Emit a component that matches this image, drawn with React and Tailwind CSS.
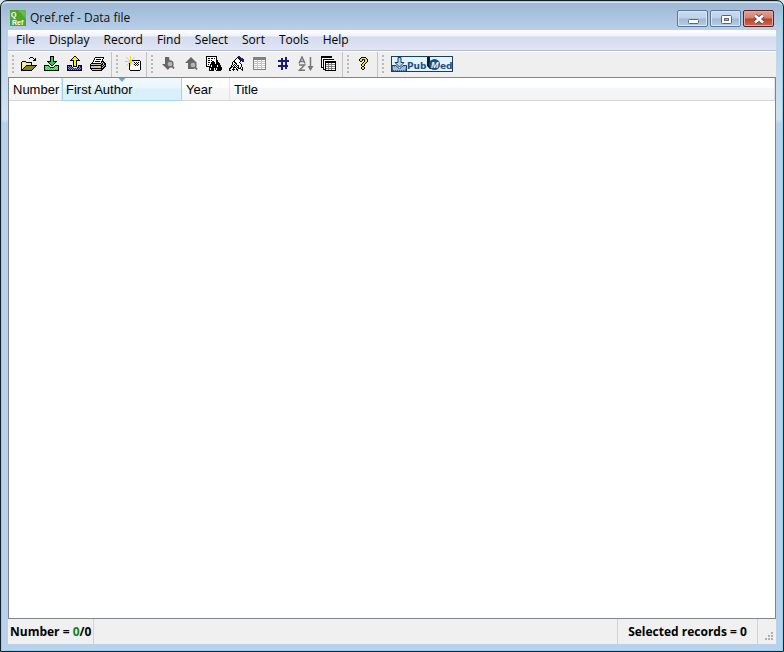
import { useState } from "react";

// one letter per colour used in the toolbar bitmaps
const palette = {
  K: "#000000",
  W: "#ffffff",
  Y: "#f4ee9a",
  O: "#85802c",
  G: "#2fd04a",
  g: "#8fd89a",
  L: "#fff200",
  N: "#1c1c78",
  n: "#8f92d0",
  S: "#808080",
  s: "#c4c4c4",
  y: "#e6d820",
};

const openFolder = [
  "................",
  ".........KKK....",
  "........K...K.K.",
  ".............KK.",
  "............KKK.",
  ".KKKK...........",
  "KYYYYKKKKKK.....",
  "KYYYYYYYYYK.....",
  "KYYYYYYYYYK.....",
  "KYYYYKKKKKKKKKKK",
  "KYYYKOOOOOOOOOK.",
  "KYYKOOOOOOOOOK..",
  "KYKOOOOOOOOOK...",
  "KKOOOOOOOOOK....",
  "KKKKKKKKKKK.....",
];

const importArrow = [
  "......KKKK......",
  "......KGGK......",
  "......KGGK......",
  "......KGGK......",
  "......KGGK......",
  "...KKKKGGKKKK...",
  "....KGGGGGGK....",
  ".....KGGGGK.....",
  "......KGGK......",
  "KKKKK..KK..KKKK.",
  "KgGgGK....KgGgK.",
  "KGgGgGKKKKgGgGK.",
  "KgGgGgGgGgGgGgK.",
  "KGgGgGgGgGgGgGK.",
  "KKKKKKKKKKKKKKK.",
];

const exportArrow = [
  ".......KK.......",
  "......KLLK......",
  ".....KLLLLK.....",
  "....KLLLLLLK....",
  "...KKKKLLKKKK...",
  "......KLLK......",
  "......KLLK......",
  "......KLLK......",
  "......KLLK......",
  "KKKKK.KLLK.KKKK.",
  "KnNnK.KKKK.KnNK.",
  "KNnNnK....KNnNK.",
  "KnNnNnNnNnNnNnK.",
  "KNnNnNnNnNnNnNK.",
  "KKKKKKKKKKKKKKK.",
];

const printer = [
  "................",
  ".....KKKKKKKKK..",
  "....KWWWWWWWWK..",
  "....KWKKKKKWK...",
  "...KWWWWWWWWK...",
  "...KWKKKKKWKKK..",
  "..KWWWWWWWWKsKK.",
  ".KKKKKKKKKKsKsKK",
  "KssssssssssKKsKK",
  "KKKKKKKKKKKKsKsK",
  "KsssssssLLsKKsKK",
  "KssssssssssKsKK.",
  "KKKKKKKKKKKKKK..",
  ".KsssssssssKK...",
  "..KKKKKKKKKK....",
];

const newRecord = [
  ".....y..........",
  ".y...y...y......",
  "..y..y..y.......",
  "...y.y.y........",
  "....yyyKKKKKKKK.",
  "yyyyyLyyyWWWWWWK",
  "....yyyWWKWKWKWK",
  "...yKyWyWWKWKWWK",
  "..y.KyWWyKWKWKWK",
  ".y..KyWWWWKWKWWK",
  "....KWWWWWWWWWWK",
  "....KWWWWWWWWWWK",
  "....KWWWWWWWWWWK",
  "....KWWWWWWWWWWK",
  ".....KKKKKKKKKK.",
];

const findRecord = [
  "KKKKKKKKKKK.....",
  "KWWWWWWWWWK.....",
  "KWKKWKKWKWK.....",
  "KWWWWWWWWWK.....",
  "KWKKWKWWWWKK....",
  "KWWWWWKKWWKK....",
  "KWKKWKKKKWKKK...",
  "KWWWWKKKKWKKKK..",
  "KWKWKKKKKKKKKK..",
  "KWWWKWKKKKKWKKK.",
  "KKKKKWKKKKKWKKK.",
  "...KKKKKKKKKKKKK",
  "...KWKKK.KWKKKKK",
  "...KWKKK.KWKKKKK",
  "...KKKKK..KKKKK.",
];

const editHand = [
  ".........NN.....",
  "........KNNN....",
  ".......KWKNNNN..",
  "......KWWWKNNNN.",
  ".....KWWWWWKNNN.",
  "....KKWWWWWK.NN.",
  "...KWKKWWWK.....",
  "...KWWKKWWWK....",
  "...KWKWKWWWWK...",
  "..KWKWKWKKWWK...",
  "..KKWKWKWKWWK...",
  ".KKWKKKWKKWKWK..",
  "KKWWKWWKWKKKWK..",
  "K..KKK.KK...KK..",
  "KK..K...K....K..",
];

const datasheet = [
  "................",
  ".SSSSSSSSSSSSS..",
  ".SSSSSSSSSSSSS..",
  ".SSSSSSSSSSSSS..",
  ".SWWWsWWWsWWWS..",
  ".SsssssssssssS..",
  ".SWWWsWWWsWWWS..",
  ".SsssssssssssS..",
  ".SWWWsWWWsWWWS..",
  ".SsssssssssssS..",
  ".SWWWsWWWsWWWS..",
  ".SsssssssssssS..",
  ".SWWWsWWWsWWWS..",
  ".SSSSSSSSSSSSS..",
];

const hash = [
  "................",
  "..........NN....",
  "......NN..NN....",
  "......NN..NN....",
  "...NNNNNNNNNNN..",
  "...NNNNNNNNNNN..",
  "......NN..NN....",
  "......NN..NN....",
  "......NN..NN....",
  "...NNNNNNNNNN...",
  "...NNNNNNNNNN...",
  "......NN..NN....",
  "......NN..NN....",
  "......NN........",
];

const copies = [
  "KKKKKKKKKKK.....",
  "KKKKKKKKKKK.....",
  "KWWWWWWWWWW.....",
  "KWKKKKKKKKKKK...",
  "KWKWWWWWWWWWW...",
  "KWKWKKKKKKKKKKK.",
  "KWKWKKKKKKKKKKK.",
  "KWKWKWWSWWSWWWK.",
  "KWKWKSSSSSSSSSK.",
  "KWKWKWWSWWSWWWK.",
  "KWKWKSSSSSSSSSK.",
  "KKKWKWWSWWSWWWK.",
  "..KWKSSSSSSSSSK.",
  "..KKKWWSWWSWWWK.",
  "....KKKKKKKKKKK.",
];

const question = [
  "................",
  ".....KKKKK......",
  "....KyLLLyK.....",
  "...KyLKKKLyK....",
  "...KyyK.KLyK....",
  "....KK..KLyK....",
  ".......KLyK.....",
  "......KLyK......",
  ".....KLyK.......",
  ".....KLyK.......",
  "......KK........",
  ".....KLyK.......",
  ".....KyyK.......",
  "......KK........",
];

const PixelIcon = ({ rows }) => (
  <svg
    viewBox="0 0 16 16"
    className="h-4 w-4"
    shapeRendering="crispEdges"
    aria-hidden="true"
  >
    {rows.map((row, y) =>
      [...row].map((c, x) =>
        palette[c] ? (
          <rect
            key={`${x}-${y}`}
            x={x}
            y={y}
            width="1"
            height="1"
            fill={palette[c]}
          />
        ) : null
      )
    )}
  </svg>
);

const NextIcon = () => (
  <svg viewBox="0 0 16 16" className="h-4 w-4" aria-hidden="true">
    <path d="M5 1h4l1 6h3l-5 7-6-6h3z" fill="#666" />
    <circle cx="10" cy="8" r="3" fill="#b5b5b5" stroke="#6a6a6a" strokeWidth="1.3" />
    <path d="M12 10l2 2.500" stroke="#666" strokeWidth="1.800" />
  </svg>
);

const PreviousIcon = () => (
  <svg viewBox="0 0 16 16" className="h-4 w-4" aria-hidden="true">
    <path d="M8 1l6 6h-3v6H5V7H2z" fill="#666" />
    <circle cx="10" cy="9" r="3" fill="#b5b5b5" stroke="#6a6a6a" strokeWidth="1.3" />
    <path d="M12 11l2 2.500" stroke="#666" strokeWidth="1.800" />
  </svg>
);

const SortIcon = () => (
  <svg
    viewBox="0 0 16 16"
    className="h-4 w-4"
    fill="none"
    stroke="#777"
    strokeWidth="1.500"
    aria-hidden="true"
  >
    <path d="M1 7.500l3-6.500 3 6.500M2 5.500h4" />
    <path d="M1 9h5.500L1.500 14.200h5.500" />
    <path d="M12.500 1v12" />
    <path d="M9.500 10h6l-3 5z" fill="#777" stroke="none" />
  </svg>
);

const PubMedLogo = () => (
  <svg viewBox="0 0 62 16" className="h-4 w-[62px]" aria-hidden="true">
    <rect x="0.5" y="0.5" width="61" height="15" fill="#e4f4fc" stroke="#173e66" />
    <path d="M1 9.500h4l3 3h1l3-3h3.500V15H1z" fill="#7094b8" stroke="#173e66" />
    <path
      d="M2 11h3M3 12h3M2 13h12M3 14h12M12 11h3M11 12h4"
      stroke="#d7eaf8"
      strokeDasharray="1 1"
    />
    <path
      d="M7 1.500h3v5h3l-4.500 4.500L4 6.500h3z"
      fill="#b8d4ee"
      stroke="#173e66"
    />
    <text
      x="16"
      y="13"
      fill="#174f8c"
      fontFamily="'DejaVu Sans', sans-serif"
      fontWeight="bold"
      fontSize="9"
    >
      Pub
    </text>
    <path d="M36 1h3v10l2 2h-2l-3-3z" fill="#111827" />
    <circle cx="43.5" cy="8.500" r="5.500" fill="#174f8c" />
    <text
      x="40"
      y="12"
      fill="#e9f6fd"
      fontFamily="'Liberation Sans', sans-serif"
      fontStyle="italic"
      fontWeight="bold"
      fontSize="9"
    >
      M
    </text>
    <text
      x="49"
      y="13"
      fill="#174f8c"
      fontFamily="'DejaVu Sans', sans-serif"
      fontWeight="bold"
      fontSize="9"
    >
      ed
    </text>
  </svg>
);

const AppIcon = () => (
  <svg viewBox="0 0 16 16" className="h-4 w-4" aria-hidden="true">
    <rect width="16" height="16" fill="#4da52f" />
    <path d="M8 0h8v9z" fill="#66b94a" />
    <g
      fill="#fff"
      fontFamily="'Liberation Sans', sans-serif"
      fontWeight="bold"
      fontSize="7"
    >
      <text x="1" y="7">
        Q
      </text>
      <text x="2" y="15">
        Ref
      </text>
    </g>
  </svg>
);

const menus = [
  "File",
  "Display",
  "Record",
  "Find",
  "Select",
  "Sort",
  "Tools",
  "Help",
];

const toolGroups = [
  [
    { label: "Open", icon: <PixelIcon rows={openFolder} /> },
    { label: "Import", icon: <PixelIcon rows={importArrow} /> },
    { label: "Export", icon: <PixelIcon rows={exportArrow} /> },
    { label: "Print", icon: <PixelIcon rows={printer} /> },
  ],
  [{ label: "New record", icon: <PixelIcon rows={newRecord} /> }],
  [
    { label: "Find next", icon: <NextIcon /> },
    { label: "Find previous", icon: <PreviousIcon /> },
    { label: "Find", icon: <PixelIcon rows={findRecord} /> },
    { label: "Edit", icon: <PixelIcon rows={editHand} /> },
    { label: "Datasheet", icon: <PixelIcon rows={datasheet} /> },
    { label: "Go to number", icon: <PixelIcon rows={hash} /> },
    { label: "Sort", icon: <SortIcon /> },
    { label: "Copy", icon: <PixelIcon rows={copies} /> },
  ],
  [{ label: "Help", icon: <PixelIcon rows={question} /> }],
];

const columns = [
  { name: "Number", width: "w-[53px]" },
  { name: "First Author", width: "w-[120px]" },
  { name: "Year", width: "w-12" },
  { name: "Title", width: "" },
];

const Grip = () => (
  <span className="mr-[2px] flex w-[3px] flex-col gap-[2px]">
    {[0, 1, 2, 3, 4].map((i) => (
      <span key={i} className="h-[2px] w-[2px] bg-[#b9b9b9]" />
    ))}
  </span>
);

const TitleBar = () => (
  <header className="flex h-[29px] items-start justify-between pr-[2px] pt-[9px]">
    <div className="flex items-center gap-1 pl-[2px]">
      <AppIcon />
      <h1 className="text-[12px] leading-4 text-[#111]">
        Qref.ref - Data file
      </h1>
    </div>
    <div className="flex gap-[2px]">
      <button
        aria-label="Minimize"
        className="flex h-[17px] w-[31px] items-center justify-center rounded-[2px] border border-[#5c7896] bg-[linear-gradient(#c9dbee_0%,#bdd2e9_48%,#9db8d6_52%,#b4cde8_100%)] shadow-[inset_0_0_0_1px_#d9e7f5]"
      >
        <svg viewBox="0 0 12 12" className="h-3 w-3">
          <rect x="1.500" y="6.500" width="10" height="4" rx="1" fill="#fff" stroke="#5a6472" />
        </svg>
      </button>
      <button
        aria-label="Maximize"
        className="flex h-[17px] w-[31px] items-center justify-center rounded-[2px] border border-[#5c7896] bg-[linear-gradient(#c9dbee_0%,#bdd2e9_48%,#9db8d6_52%,#b4cde8_100%)] shadow-[inset_0_0_0_1px_#d9e7f5]"
      >
        <svg viewBox="0 0 12 12" className="h-3 w-3">
          <rect x="1.500" y="2.500" width="10" height="8" rx="1" fill="#fff" stroke="#5a6472" />
          <rect x="4.500" y="5.500" width="4" height="2" fill="#a9c0dc" stroke="#5a6472" />
        </svg>
      </button>
      <button
        aria-label="Close"
        className="flex h-[17px] w-[31px] items-center justify-center rounded-[2px] border border-[#53202a] bg-[linear-gradient(#dfa194_0%,#d2806f_48%,#b8402b_52%,#cf6b50_100%)] shadow-[inset_0_0_0_1px_#e5aa9f]"
      >
        <svg viewBox="0 0 12 12" className="h-3 w-3">
          <path d="M2 2.500l8 7M10 2.500l-8 7" stroke="#5b4a50" strokeWidth="4.400" />
          <path d="M2 2.500l8 7M10 2.500l-8 7" stroke="#fff" strokeWidth="2.500" />
        </svg>
      </button>
    </div>
  </header>
);

const App = () => {
  const [sortBy, setSortBy] = useState("First Author");

  return (
    <div className="bg-[#dfe3e6]">
      <div className="flex min-h-screen flex-col rounded-t-[7px] border border-[#10202a] bg-[#b9d1ea] bg-[linear-gradient(#9cb6d3_0px,#a9c2de_14px,#b9d0e9_30px,#d3e2f2_118px,#b9d1ea_122px)] px-[7px] pb-[7px] font-['Open_Sans',sans-serif] shadow-[inset_0_0_0_1px_#8fd3e6,inset_0_2px_0_#dbe8f5]">
        <TitleBar />

        <nav className="flex h-[21px] items-center border-b border-[#b6bccc] bg-[linear-gradient(#ffffff_0px,#eff2fa_6px,#d5dbed_7px,#e1e6f6_20px)] pl-px">
          {menus.map((menu) => (
            <button
              key={menu}
              className="px-[7px] text-[12px] leading-4 text-black"
            >
              {menu}
            </button>
          ))}
        </nav>

        <div
          role="toolbar"
          className="flex h-[26px] items-stretch border-t border-white bg-[#efefef]"
        >
          {toolGroups.map((group, i) => (
            <div
              key={i}
              className="flex items-center border-r border-[#c3c3c3] pb-px pl-1 pr-[2px]"
            >
              <Grip />
              {group.map((tool) => (
                <button
                  key={tool.label}
                  aria-label={tool.label}
                  title={tool.label}
                  className="flex h-6 w-[23px] items-center justify-center"
                >
                  {tool.icon}
                </button>
              ))}
            </div>
          ))}
          <div className="flex items-center pb-px pl-1">
            <Grip />
            <button aria-label="PubMed" className="px-1">
              <PubMedLogo />
            </button>
          </div>
        </div>

        <main className="grow border border-[#7f858d] bg-white font-['Liberation_Sans',Arial,sans-serif]">
          <table className="w-full table-fixed border-collapse">
            <thead>
              <tr>
                {columns.map(({ name, width }) => (
                  <th
                    key={name}
                    className={`${width} border-b p-0 text-left font-normal ${
                      sortBy === name
                        ? "border-b-[#a5d8ea] bg-[linear-gradient(#f0f9fd_0%,#eaf6fc_45%,#d9eff9_50%,#d9eff9_100%)] shadow-[inset_1px_0_0_#9fd4e6,inset_-1px_0_0_#9fd4e6]"
                        : "border-b-[#d5d5d5] bg-[linear-gradient(#ffffff_0%,#ffffff_42%,#f6f7f9_46%,#f3f4f6_100%)] shadow-[inset_-1px_0_0_#e1e3e6]"
                    }`}
                  >
                    <button
                      onClick={() => setSortBy(name)}
                      className="relative block h-[22px] w-full whitespace-nowrap pl-1 pt-[2px] text-left text-[13px] leading-5 text-black"
                    >
                      {name}
                      {sortBy === name && (
                        <svg
                          viewBox="0 0 7 4"
                          className="absolute left-1/2 top-0 h-1 w-[7px] -translate-x-1/2"
                        >
                          <path d="M0 0h7L3.500 4z" fill="#6fa9c4" />
                        </svg>
                      )}
                    </button>
                  </th>
                ))}
              </tr>
            </thead>
            <tbody />
          </table>
        </main>

        <footer className="flex h-[25px] items-stretch bg-[#f0f0f0] text-[12px] font-bold leading-[25px] text-black">
          <p className="w-[86px] whitespace-nowrap border-r border-[#d3d3d3] pl-[2px]">
            Number = <span className="text-[#148014]">0</span>/0
          </p>
          <p className="ml-auto w-[141px] whitespace-nowrap border-x border-[#d3d3d3] text-center">
            Selected records = 0
          </p>
          <div className="flex w-[18px] items-end justify-end p-[2px]">
            <svg viewBox="0 0 10 10" className="h-[10px] w-[10px]" fill="#b0b0b0">
              <path d="M7 0h2v2H7zM4 3h2v2H4zM7 3h2v2H7zM1 6h2v2H1zM4 6h2v2H4zM7 6h2v2H7z" />
            </svg>
          </div>
        </footer>
      </div>
    </div>
  );
};

export default App;
